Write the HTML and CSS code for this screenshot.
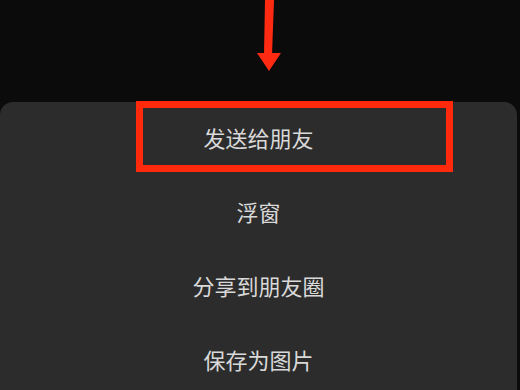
FILE: index.html
```html
<!DOCTYPE html>
<html lang="zh-CN">
<head>
<meta charset="utf-8">
<link rel="stylesheet" href="styles.css">
</head>
<body>
<div class="top">
  <svg class="arrow" width="520" height="102" viewBox="0 0 520 102">
    <polygon points="265,0 274,0 272,55 264,55" fill="#ff2a12"/>
    <polygon points="257,53 281,53 269,71" fill="#ff2a12"/>
  </svg>
</div>
<div class="sheet">
  <div class="row first">
    <span class="label">发送给朋友</span>
    <div class="highlight"></div>
  </div>
  <div class="row"><span class="label">浮窗</span></div>
  <div class="row"><span class="label">分享到朋友圈</span></div>
  <div class="row"><span class="label">保存为图片</span></div>
</div>
</body>
</html>
```
FILE: styles.css
```css
html, body {
  margin: 0;
  padding: 0;
  background: #0b0b0b;
  width: 520px;
  height: 390px;
  overflow: hidden;
}
body {
  font-family: "Noto Sans CJK SC", "Noto Sans", sans-serif;
}
.top {
  height: 102px;
}
.arrow {
  display: block;
}
.sheet {
  width: 517px;
  background: #2c2c2c;
  border-radius: 13px 13px 0 0;
  height: 288px;
}
.row {
  height: 74px;
  box-sizing: border-box;
  padding-bottom: 4px;
  display: flex;
  align-items: center;
  justify-content: center;
}
.first {
  position: relative;
}
.label {
  color: #d9d9d9;
  font-size: 22px;
  line-height: 1;
  letter-spacing: 0;
}
.highlight {
  position: absolute;
  left: 136px;
  top: -1px;
  width: 303px;
  height: 57px;
  border: 7px solid #ff2a0c;
}
```
